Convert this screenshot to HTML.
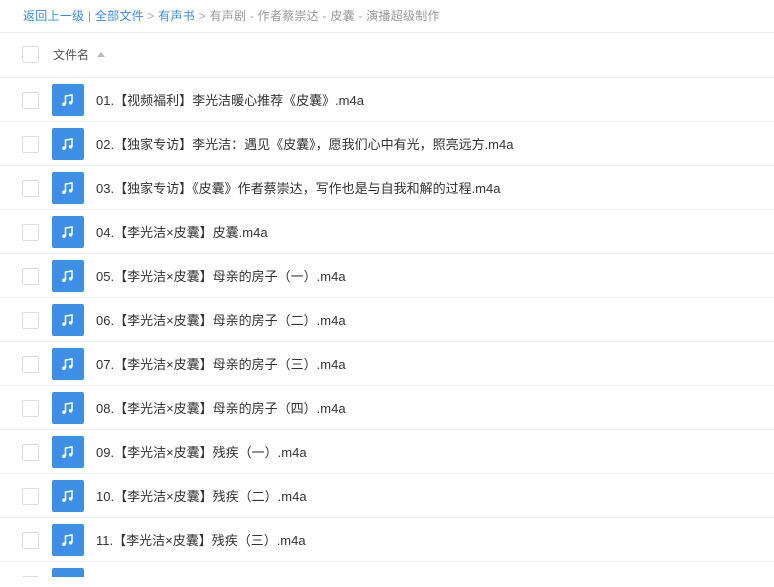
<!DOCTYPE html>
<html><head><meta charset="utf-8"><style>
body{margin:0;background:#fff;font-family:"Liberation Sans","Noto Sans CJK SC",sans-serif;width:774px;height:587px;overflow:hidden;position:relative}
.bc{position:absolute;left:23px;top:7px;font-size:12px;color:#999;white-space:nowrap;letter-spacing:0.25px}
.bc a{color:#3b8cde;text-decoration:none}
.bc .g{color:#aaa}
.line{position:absolute;left:0;width:774px;height:1px;background:#eee}
.cb{position:absolute;left:22px;width:15px;height:15px;border:1px solid #ddd;border-radius:2px;background:#fff}
.hd{position:absolute;left:53px;top:46px;font-size:12px;color:#555}
.tri{display:inline-block;width:0;height:0;border-left:4px solid transparent;border-right:4px solid transparent;border-bottom:5px solid #bbb;margin-left:8px;vertical-align:2px}
.ic{position:absolute;left:52px;width:32px;height:32px;background:#3d8fe6;border-radius:2px}
.ic svg{position:absolute;left:9px;top:9px}
.nm{position:absolute;left:96px;font-size:13px;color:#333;white-space:nowrap}
.clip{position:absolute;left:0;top:0;width:774px;height:577px;overflow:hidden}
</style></head><body>
<div class="clip">
<div class="bc"><a>返回上一级</a> | <a>全部文件</a> <span class="g">&gt;</span> <a>有声书</a> <span class="g">&gt;</span> 有声剧 - 作者蔡崇达 - 皮囊 - 演播超级制作</div>
<div class="line" style="top:32px"></div>
<div class="cb" style="top:46px"></div>
<div class="hd">文件名<span class="tri"></span></div>
<div class="line" style="top:77px"></div>
<div id="rows"></div>
</div>
<script>
var n=["01.【视频福利】李光洁暖心推荐《皮囊》.m4a","02.【独家专访】李光洁：遇见《皮囊》，愿我们心中有光，照亮远方.m4a","03.【独家专访】《皮囊》作者蔡崇达，写作也是与自我和解的过程.m4a","04.【李光洁×皮囊】皮囊.m4a","05.【李光洁×皮囊】母亲的房子（一）.m4a","06.【李光洁×皮囊】母亲的房子（二）.m4a","07.【李光洁×皮囊】母亲的房子（三）.m4a","08.【李光洁×皮囊】母亲的房子（四）.m4a","09.【李光洁×皮囊】残疾（一）.m4a","10.【李光洁×皮囊】残疾（二）.m4a","11.【李光洁×皮囊】残疾（三）.m4a",""];
var h="",svg='<svg width="14" height="14" viewBox="0 0 14 14"><path d="M4.5 11V3L11 2V9.5" stroke="#fff" stroke-width="1.5" fill="none"/><circle cx="3" cy="11.2" r="1.8" fill="#fff"/><circle cx="9.6" cy="9.8" r="1.8" fill="#fff"/></svg>';
for(var i=0;i<n.length;i++){var t=78+i*44;
h+='<div class="cb" style="top:'+(t+14)+'px"></div><div class="ic" style="top:'+(t+6)+'px">'+svg+'</div><div class="nm" style="top:'+(t+12)+'px">'+n[i]+'</div><div class="line" style="top:'+(t+43)+'px"></div>';}
document.getElementById("rows").innerHTML=h;
</script>
</body></html>
